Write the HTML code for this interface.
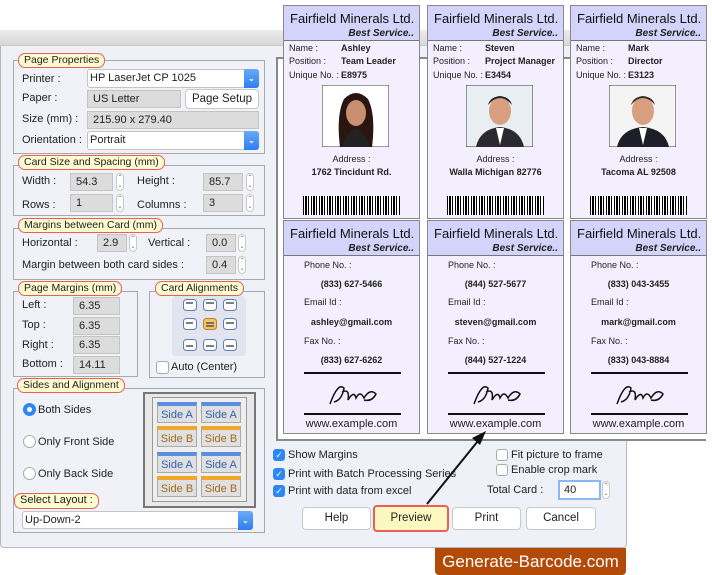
<!DOCTYPE html>
<html><head><meta charset="utf-8"><style>
*{box-sizing:border-box;margin:0;padding:0}
body{width:712px;height:575px;position:relative;background:#fff;font-family:"Liberation Sans",sans-serif;overflow:hidden;font-size:11px;color:#222}
.a{position:absolute}
.dlg{left:0;top:30px;width:627px;height:518px;background:#eef1f8;border:1px solid #b8b8b8;border-radius:0 0 4px 4px}
.tb{left:0;top:30px;width:627px;height:16px;background:linear-gradient(#ececec,#d8d8d8);border-bottom:1px solid #c8c8c8}
.fs{border:1px solid #a9a9a9;background:#f0f2f8}
.lg{background:#fdfbcf;border:1.5px solid #e8605a;border-radius:7px;font-size:10.5px;padding:0 5px;line-height:12px;height:15px;white-space:nowrap}
.t{white-space:nowrap}
.in{background:#dcdcdc;border:1px solid #c4c4c4;padding-left:5px;line-height:16px;font-size:11px}
.sel{background:#fff;border:1px solid #c4c4c4;border-radius:3px;padding-left:2px;line-height:17px}
.sel b{position:absolute;right:-1px;top:-1px;width:15px;height:19px;background:linear-gradient(#6aaaf8,#2c7ef0);border-radius:0 3px 3px 0;color:#fff;font-size:8px;text-align:center;line-height:19px}
.sp{width:8px;height:18px;border:1px solid #c8c8c8;border-radius:4px;background:#fff;font-size:6px;text-align:center;line-height:8px;color:#666}
.btn{background:#fff;border:1px solid #c8c8c8;border-radius:4px;text-align:center;line-height:21px;font-size:11.5px}
.cb{width:12px;height:12px;border-radius:3px;background:#2f86f5;color:#fff;font-size:9px;line-height:12px;text-align:center}
.cbe{width:12px;height:12px;border-radius:3px;background:#fff;border:1px solid #aaa}
.card{width:137px;height:214px;border:1px solid #888;background:#f3efff}
.hd{position:absolute;left:0;top:0;width:135px;height:35px;background:#d3d3fb;border-bottom:1px solid #777}
.hd .n{position:absolute;left:6px;top:5px;font-size:13px;color:#111;white-space:nowrap}
.hd .s{position:absolute;right:5px;top:22px;font-size:10px;font-weight:bold;font-style:italic;white-space:nowrap}
.card .f{position:absolute;font-size:9px;white-space:nowrap}
.bold{font-weight:bold}
.bc{position:absolute;left:19px;top:190px;width:97px;height:19px;background:repeating-linear-gradient(90deg,#000 0 1px,#fff 1px 2px,#000 2px 4px,#fff 4px 5px,#000 5px 6px,#fff 6px 8px)}
.tile{width:40px;height:21px;border:1px solid #aaa;background:#e0e0e0;font-size:11px;text-align:center;line-height:22px}
</style></head><body>
<div class="a dlg"></div>
<div class="a tb"></div>

<div class="a fs" style="left:13px;top:60px;width:252px;height:94px"></div>
<div class="a lg" style="left:18px;top:53px">Page Properties</div>
<div class="a t" style="left:22px;top:73px">Printer :</div>
<div class="a sel" style="left:87px;top:69px;width:172px;height:19px">HP LaserJet CP 1025<b>⌄</b></div>
<div class="a t" style="left:22px;top:92px">Paper :</div>
<div class="a in" style="left:87px;top:90px;width:94px;height:18px">US Letter</div>
<div class="a btn" style="left:185px;top:89px;width:74px;height:20px;line-height:18px">Page Setup</div>
<div class="a t" style="left:22px;top:113px">Size (mm) :</div>
<div class="a in" style="left:87px;top:111px;width:172px;height:18px">215.90 x 279.40</div>
<div class="a t" style="left:22px;top:134px">Orientation :</div>
<div class="a sel" style="left:87px;top:131px;width:172px;height:19px">Portrait<b>⌄</b></div>

<div class="a fs" style="left:13px;top:165px;width:252px;height:51px"></div>
<div class="a lg" style="left:18px;top:155px">Card Size and Spacing (mm)</div>
<div class="a t" style="left:22px;top:175px">Width :</div>
<div class="a in" style="left:70px;top:173px;width:43px;height:18px">54.3</div>
<div class="a sp" style="left:116px;top:173px">⌃<br>⌄</div>
<div class="a t" style="left:137px;top:175px">Height :</div>
<div class="a in" style="left:203px;top:173px;width:40px;height:18px">85.7</div>
<div class="a sp" style="left:246px;top:173px">⌃<br>⌄</div>
<div class="a t" style="left:22px;top:199px">Rows :</div>
<div class="a in" style="left:70px;top:194px;width:43px;height:18px">1</div>
<div class="a sp" style="left:116px;top:194px">⌃<br>⌄</div>
<div class="a t" style="left:137px;top:199px">Columns :</div>
<div class="a in" style="left:203px;top:194px;width:40px;height:18px">3</div>
<div class="a sp" style="left:246px;top:194px">⌃<br>⌄</div>

<div class="a fs" style="left:13px;top:228px;width:252px;height:52px"></div>
<div class="a lg" style="left:18px;top:218px">Margins between Card (mm)</div>
<div class="a t" style="left:22px;top:237px">Horizontal :</div>
<div class="a in" style="left:97px;top:234px;width:30px;height:18px">2.9</div>
<div class="a sp" style="left:129px;top:234px">⌃<br>⌄</div>
<div class="a t" style="left:148px;top:237px">Vertical :</div>
<div class="a in" style="left:206px;top:234px;width:30px;height:18px">0.0</div>
<div class="a sp" style="left:238px;top:234px">⌃<br>⌄</div>
<div class="a t" style="left:22px;top:259px">Margin between both card sides :</div>
<div class="a in" style="left:206px;top:256px;width:30px;height:18px">0.4</div>
<div class="a sp" style="left:238px;top:256px">⌃<br>⌄</div>

<div class="a fs" style="left:13px;top:291px;width:125px;height:86px"></div>
<div class="a lg" style="left:18px;top:281px">Page Margins (mm)</div>
<div class="a t" style="left:22px;top:299px">Left :</div>
<div class="a in" style="left:73px;top:297px;width:47px;height:18px">6.35</div>
<div class="a t" style="left:22px;top:319px">Top :</div>
<div class="a in" style="left:73px;top:317px;width:47px;height:18px">6.35</div>
<div class="a t" style="left:22px;top:339px">Right :</div>
<div class="a in" style="left:73px;top:336px;width:47px;height:18px">6.35</div>
<div class="a t" style="left:22px;top:358px">Bottom :</div>
<div class="a in" style="left:73px;top:356px;width:47px;height:18px">14.11</div>

<div class="a fs" style="left:149px;top:291px;width:116px;height:87px"></div>
<div class="a lg" style="left:155px;top:281px">Card Alignments</div>
<div class="a" style="left:172px;top:296px;width:74px;height:60px;background:#e2e5ee;border-radius:3px"></div>
<svg class="a" style="left:180px;top:298px" width="60" height="56">
<g fill="#fff" stroke="#5a7fb8" stroke-width="1">
<rect x="3.5" y="1.5" width="13" height="11" rx="3"/><rect x="23.5" y="1.5" width="13" height="11" rx="3"/><rect x="43.5" y="1.5" width="13" height="11" rx="3"/>
<rect x="3.5" y="20.5" width="13" height="11" rx="3"/><rect x="23.5" y="20.5" width="13" height="11" rx="3" fill="#f7c46a" stroke="#c08020"/><rect x="43.5" y="20.5" width="13" height="11" rx="3"/>
<rect x="3.5" y="41.5" width="13" height="11" rx="3"/><rect x="23.5" y="41.5" width="13" height="11" rx="3"/><rect x="43.5" y="41.5" width="13" height="11" rx="3"/>
</g>
<g stroke="#555" stroke-width="1.5">
<path d="M6 5h7M26 5h8M46 5h8M6 25h7M26 25h8M26 28h8M46 25h8M6 48h7M26 48h8M46 48h8"/></g></svg>
<div class="a cbe" style="left:156px;top:361px;width:13px;height:13px"></div>
<div class="a t" style="left:171px;top:361px">Auto (Center)</div>

<div class="a fs" style="left:13px;top:388px;width:252px;height:145px"></div>
<div class="a lg" style="left:17px;top:378px">Sides and Alignment</div>
<div class="a" style="left:23px;top:403px;width:13px;height:13px;border-radius:50%;background:#2f86f5"><div class="a" style="left:4px;top:4px;width:5px;height:5px;border-radius:50%;background:#fff"></div></div>
<div class="a t" style="left:38px;top:404px">Both Sides</div>
<div class="a" style="left:23px;top:435px;width:13px;height:13px;border-radius:50%;background:#fff;border:1px solid #aaa"></div>
<div class="a t" style="left:38px;top:436px">Only Front Side</div>
<div class="a" style="left:23px;top:467px;width:13px;height:13px;border-radius:50%;background:#fff;border:1px solid #aaa"></div>
<div class="a t" style="left:38px;top:468px">Only Back Side</div>
<div class="a" style="left:143px;top:392px;width:113px;height:116px;border:2px solid #777;background:#e8e8e8"></div>
<div class="a" style="left:152px;top:397px;width:95px;height:105px;border:1px solid #999;background:#eee"></div>
<div class="a tile" style="left:157px;top:402px;border-top:4px solid #5b8ee0;color:#3060b0;line-height:18px">Side A</div>
<div class="a tile" style="left:201px;top:402px;border-top:4px solid #5b8ee0;color:#3060b0;line-height:18px">Side A</div>
<div class="a tile" style="left:157px;top:426px;border-top:4px solid #f2a72a;color:#a06a20;line-height:18px">Side B</div>
<div class="a tile" style="left:201px;top:426px;border-top:4px solid #f2a72a;color:#a06a20;line-height:18px">Side B</div>
<div class="a tile" style="left:157px;top:452px;border-top:4px solid #5b8ee0;color:#3060b0;line-height:18px">Side A</div>
<div class="a tile" style="left:201px;top:452px;border-top:4px solid #5b8ee0;color:#3060b0;line-height:18px">Side A</div>
<div class="a tile" style="left:157px;top:476px;border-top:4px solid #f2a72a;color:#a06a20;line-height:18px">Side B</div>
<div class="a tile" style="left:201px;top:476px;border-top:4px solid #f2a72a;color:#a06a20;line-height:18px">Side B</div>
<div class="a lg" style="left:14px;top:493px;height:16px;font-size:11px;line-height:13px">Select Layout :</div>
<div class="a sel" style="left:22px;top:511px;width:231px;height:18px;font-size:11px">Up-Down-2<b>⌄</b></div>

<div class="a" style="left:276px;top:57px;width:430px;height:384px;border:2px solid #888;border-right:none;background:#fff"></div>

<div class="a card" style="left:283px;top:5px"><div class="hd"><div class="n">Fairfield Minerals Ltd.</div><div class="s">Best Service..</div></div>
<div class="f" style="left:5px;top:37px">Name :</div><div class="f bold" style="left:57px;top:37px">Ashley</div>
<div class="f" style="left:5px;top:50px">Position :</div><div class="f bold" style="left:57px;top:50px">Team Leader</div>
<div class="f" style="left:5px;top:64px">Unique No. :</div><div class="f bold" style="left:57px;top:64px">E8975</div>
<svg class="a" style="left:38px;top:79px" width="67" height="62"><rect width="67" height="62" fill="#fff" stroke="#333"/><path d="M18 62 Q14 30 22 14 Q34 2 46 14 Q54 30 50 62Z" fill="#2a1510"/><ellipse cx="34" cy="28" rx="10" ry="13" fill="#c89070"/><path d="M20 62 Q26 44 34 44 Q42 44 48 62Z" fill="#222"/></svg>
<div class="f" style="left:0;width:135px;text-align:center;top:148px">Address :</div>
<div class="f bold" style="left:0;width:135px;text-align:center;top:161px">1762 Tincidunt Rd.</div>
<div class="bc"></div></div>
<div class="a card" style="left:427px;top:5px"><div class="hd"><div class="n">Fairfield Minerals Ltd.</div><div class="s">Best Service..</div></div>
<div class="f" style="left:5px;top:37px">Name :</div><div class="f bold" style="left:57px;top:37px">Steven</div>
<div class="f" style="left:5px;top:50px">Position :</div><div class="f bold" style="left:57px;top:50px">Project Manager</div>
<div class="f" style="left:5px;top:64px">Unique No. :</div><div class="f bold" style="left:57px;top:64px">E3454</div>
<svg class="a" style="left:38px;top:79px" width="67" height="62"><rect width="67" height="62" fill="#e8eef2" stroke="#333"/><ellipse cx="34" cy="26" rx="11" ry="14" fill="#d8a080"/><path d="M22 20 Q34 6 46 20 Q44 12 34 11 Q24 12 22 20Z" fill="#222"/><path d="M10 62 Q14 44 34 42 Q54 44 58 62Z" fill="#2a2a30"/><path d="M30 43 L34 60 L38 43Z" fill="#fff"/></svg>
<div class="f" style="left:0;width:135px;text-align:center;top:148px">Address :</div>
<div class="f bold" style="left:0;width:135px;text-align:center;top:161px">Walla Michigan 82776</div>
<div class="bc"></div></div>
<div class="a card" style="left:570px;top:5px"><div class="hd"><div class="n">Fairfield Minerals Ltd.</div><div class="s">Best Service..</div></div>
<div class="f" style="left:5px;top:37px">Name :</div><div class="f bold" style="left:57px;top:37px">Mark</div>
<div class="f" style="left:5px;top:50px">Position :</div><div class="f bold" style="left:57px;top:50px">Director</div>
<div class="f" style="left:5px;top:64px">Unique No. :</div><div class="f bold" style="left:57px;top:64px">E3123</div>
<svg class="a" style="left:38px;top:79px" width="67" height="62"><rect width="67" height="62" fill="#f4f4f4" stroke="#333"/><ellipse cx="34" cy="26" rx="11" ry="14" fill="#d8a080"/><path d="M22 20 Q34 6 46 20 Q44 12 34 11 Q24 12 22 20Z" fill="#3a2a20"/><path d="M8 62 Q12 44 34 42 Q56 44 60 62Z" fill="#1e1e28"/><path d="M30 43 L34 60 L38 43Z" fill="#fff"/></svg>
<div class="f" style="left:0;width:135px;text-align:center;top:148px">Address :</div>
<div class="f bold" style="left:0;width:135px;text-align:center;top:161px">Tacoma AL 92508</div>
<div class="bc"></div></div>

<div class="a card" style="left:283px;top:220px"><div class="hd"><div class="n">Fairfield Minerals Ltd.</div><div class="s">Best Service..</div></div>
<div class="f" style="left:20px;top:39px">Phone No. :</div><div class="f bold" style="left:0;width:135px;text-align:center;top:58px">(833) 627-5466</div>
<div class="f" style="left:20px;top:76px">Email Id :</div><div class="f bold" style="left:0;width:135px;text-align:center;top:96px">ashley@gmail.com</div>
<div class="f" style="left:20px;top:115px">Fax No. :</div><div class="f bold" style="left:0;width:135px;text-align:center;top:134px">(833) 627-6262</div>
<div class="a" style="left:20px;top:151px;width:97px;border-top:2px solid #111"></div>
<svg class="a" style="left:40px;top:157px" width="60" height="32"><path d="M6 26 Q14 4 20 10 Q18 22 10 24 M18 14 Q26 10 24 22 Q30 12 32 20 Q36 12 40 20 Q46 10 52 16 Q48 24 40 22" fill="none" stroke="#111" stroke-width="1.5"/></svg>
<div class="a" style="left:20px;top:192px;width:97px;border-top:2px solid #111"></div>
<div class="f" style="left:0;width:135px;text-align:center;top:197px;font-size:11px">www.example.com</div></div>

<div class="a card" style="left:427px;top:220px"><div class="hd"><div class="n">Fairfield Minerals Ltd.</div><div class="s">Best Service..</div></div>
<div class="f" style="left:20px;top:39px">Phone No. :</div><div class="f bold" style="left:0;width:135px;text-align:center;top:58px">(844) 527-5677</div>
<div class="f" style="left:20px;top:76px">Email Id :</div><div class="f bold" style="left:0;width:135px;text-align:center;top:96px">steven@gmail.com</div>
<div class="f" style="left:20px;top:115px">Fax No. :</div><div class="f bold" style="left:0;width:135px;text-align:center;top:134px">(844) 527-1224</div>
<div class="a" style="left:20px;top:151px;width:97px;border-top:2px solid #111"></div>
<svg class="a" style="left:40px;top:157px" width="60" height="32"><path d="M6 26 Q14 4 20 10 Q18 22 10 24 M18 14 Q26 10 24 22 Q30 12 32 20 Q36 12 40 20 Q46 10 52 16 Q48 24 40 22" fill="none" stroke="#111" stroke-width="1.5"/></svg>
<div class="a" style="left:20px;top:192px;width:97px;border-top:2px solid #111"></div>
<div class="f" style="left:0;width:135px;text-align:center;top:197px;font-size:11px">www.example.com</div></div>

<div class="a card" style="left:570px;top:220px"><div class="hd"><div class="n">Fairfield Minerals Ltd.</div><div class="s">Best Service..</div></div>
<div class="f" style="left:20px;top:39px">Phone No. :</div><div class="f bold" style="left:0;width:135px;text-align:center;top:58px">(833) 043-3455</div>
<div class="f" style="left:20px;top:76px">Email Id :</div><div class="f bold" style="left:0;width:135px;text-align:center;top:96px">mark@gmail.com</div>
<div class="f" style="left:20px;top:115px">Fax No. :</div><div class="f bold" style="left:0;width:135px;text-align:center;top:134px">(833) 043-8884</div>
<div class="a" style="left:20px;top:151px;width:97px;border-top:2px solid #111"></div>
<svg class="a" style="left:40px;top:157px" width="60" height="32"><path d="M6 26 Q14 4 20 10 Q18 22 10 24 M18 14 Q26 10 24 22 Q30 12 32 20 Q36 12 40 20 Q46 10 52 16 Q48 24 40 22" fill="none" stroke="#111" stroke-width="1.5"/></svg>
<div class="a" style="left:20px;top:192px;width:97px;border-top:2px solid #111"></div>
<div class="f" style="left:0;width:135px;text-align:center;top:197px;font-size:11px">www.example.com</div></div>

<div class="a cb" style="left:273px;top:449px">✓</div><div class="a t" style="left:288px;top:449px;font-size:11px">Show Margins</div>
<div class="a cb" style="left:273px;top:468px">✓</div><div class="a t" style="left:288px;top:468px;font-size:11px">Print with Batch Processing Series</div>
<div class="a cb" style="left:273px;top:485px">✓</div><div class="a t" style="left:288px;top:485px;font-size:11px">Print with data from excel</div>
<div class="a cbe" style="left:496px;top:449px"></div><div class="a t" style="left:511px;top:449px;font-size:11px">Fit picture to frame</div>
<div class="a cbe" style="left:496px;top:464px"></div><div class="a t" style="left:511px;top:464px;font-size:11px">Enable crop mark</div>
<div class="a t" style="left:487px;top:484px;font-size:11px">Total Card :</div>
<div class="a" style="left:558px;top:480px;width:43px;height:20px;background:#fff;border:2px solid #8ab8f4;padding-left:4px;line-height:16px">40</div>
<div class="a sp" style="left:602px;top:481px">⌃<br>⌄</div>
<div class="a btn" style="left:302px;top:507px;width:69px;height:23px">Help</div>
<div class="a btn" style="left:373px;top:505px;width:76px;height:27px;background:#fcf8c0;border:2px solid #e8605a;line-height:23px">Preview</div>
<div class="a btn" style="left:452px;top:507px;width:69px;height:23px">Print</div>
<div class="a btn" style="left:526px;top:507px;width:70px;height:23px">Cancel</div>
<svg class="a" style="left:420px;top:428px" width="70" height="80"><path d="M7 76 L62 8" stroke="#111" stroke-width="2"/><path d="M66 3 L52 10 L60 17Z" fill="#111"/></svg>
<div class="a" style="left:435px;top:548px;width:191px;height:27px;background:#b34a08;border-radius:0 0 4px 4px;color:#fff;font-size:17px;text-align:center;line-height:27px">Generate-Barcode.com</div>
</body></html>
